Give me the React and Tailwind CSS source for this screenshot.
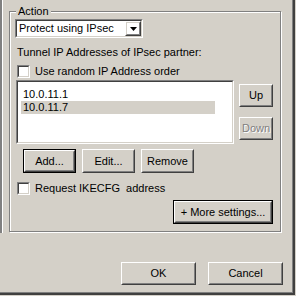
import React from 'react';

const Sunken = ({ className = '', inner = '', children }) => (
  <div className={`flex border border-t-[#808080] border-l-[#808080] border-r-white border-b-white ${className}`}>
    <div className={`flex-1 min-w-0 border border-t-[#404040] border-l-[#404040] border-r-[#d4d0c8] border-b-[#d4d0c8] ${inner}`}>
      {children}
    </div>
  </div>
);

const Button = ({ children, className = '', isDefault = false, disabled = false }) => (
  <div className={`flex ${isDefault ? 'border border-black' : ''} ${className}`}>
    <div className="flex-1 flex border border-t-white border-l-white border-r-[#404040] border-b-[#404040]">
      <div className="flex-1 flex items-center justify-center border border-t-[#d4d0c8] border-l-[#d4d0c8] border-r-[#808080] border-b-[#808080]">
        {disabled ? (
          <span className="text-[#808080] [text-shadow:1px_1px_0_#fff]">{children}</span>
        ) : (
          children
        )}
      </div>
    </div>
  </div>
);

const Checkbox = ({ label, className = '' }) => (
  <div className={`flex items-center ${className}`}>
    <Sunken className="w-[13px] h-[13px]" inner="bg-white" />
    <span className="ml-[5px] leading-[13px] whitespace-pre">{label}</span>
  </div>
);

export default function App() {
  return (
    <div className="w-[296px] h-[296px] overflow-hidden bg-[#d4d0c8] text-black text-[11px] font-['Liberation_Sans',sans-serif] flex pr-[1px] pb-[1px]">
      <div className="flex-1 flex flex-col border-r-2 border-b-2 border-[#404040]">
        <div className="flex-1 flex flex-col border-r border-b border-[#808080]">
          <div className="flex items-start">
            <div className="w-[3px] h-[233px] border-l-2 border-l-[#808080] border-r border-r-white" />

            {/* Action group */}
            <div className="relative ml-[6px] mt-[11px] w-[272px] h-[221px] border border-[#808080] shadow-[inset_1px_1px_0_#fff,1px_1px_0_#fff] flex flex-col">
              <span className="absolute -top-[7px] left-[6px] px-[2px] bg-[#d4d0c8] leading-[13px]">Action</span>

              <Sunken className="mt-[7px] ml-[5px] w-[128px] h-[19px]" inner="bg-white flex items-center">
                <span className="flex-1 pl-[2px] leading-[13px]">Protect using IPsec</span>
                <Button className="w-[16px] h-full">
                  <svg width="7" height="4" viewBox="0 0 7 4">
                    <path d="M0 0h7L3.5 4z" fill="#000" />
                  </svg>
                </Button>
              </Sunken>

              <p className="mt-[8px] ml-[7px] leading-[13px]">Tunnel IP Addresses of IPsec partner:</p>

              <Checkbox className="mt-[6px] ml-[7px]" label="Use random IP Address order" />

              <div className="flex items-start mt-[2px]">
                <Sunken className="ml-[6px] w-[218px] h-[64px]" inner="bg-white pt-[6px] pl-[3px]">
                  <div className="leading-[13px] px-[2px]">10.0.11.1</div>
                  <div className="leading-[13px] px-[2px] w-[194px] bg-[#d4d0c8]">10.0.11.7</div>
                </Sunken>
                <div className="flex flex-col ml-[5px] mt-[4px] gap-[10px]">
                  <Button className="w-[34px] h-[23px]">Up</Button>
                  <Button className="w-[34px] h-[23px]" disabled>Down</Button>
                </div>
              </div>

              <div className="flex mt-[5px] ml-[13px] gap-[6px]">
                <Button className="w-[53px] h-[24px]" isDefault>Add...</Button>
                <Button className="w-[53px] h-[24px]">Edit...</Button>
                <Button className="w-[53px] h-[24px]">Remove</Button>
              </div>

              <Checkbox className="mt-[9px] ml-[7px]" label="Request IKECFG  address" />

              <Button className="self-end mr-[7px] mt-[5px] w-[100px] h-[24px]" isDefault>+ More settings...</Button>
            </div>
          </div>

          <div className="flex justify-end gap-[12px] mt-auto mb-[7px] mr-[9px]">
            <Button className="w-[75px] h-[23px]">OK</Button>
            <Button className="w-[75px] h-[23px]">Cancel</Button>
          </div>
        </div>
      </div>
    </div>
  );
}
